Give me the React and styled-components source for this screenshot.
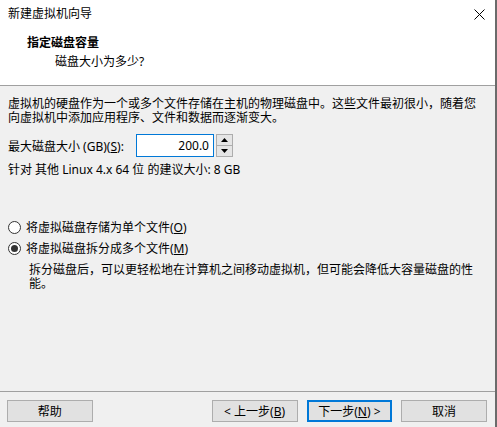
import styled, { createGlobalStyle } from "styled-components";

const GlobalStyle = createGlobalStyle`
  * {
    box-sizing: border-box;
    margin: 0;
    padding: 0;
  }
  body {
    margin: 0;
    background: #f0f0f0;
    font-family: "Noto Sans", "Noto Sans CJK SC", sans-serif;
    font-size: 12px;
    color: #000;
  }
`;

const Window = styled.div`
  width: 497px;
  height: 427px;
  display: flex;
  flex-direction: column;
  background: #f0f0f0;
  border-right: 2px solid #6b6b6b;
`;

const TitleBar = styled.div`
  height: 28px;
  background: #fff;
  display: flex;
  align-items: center;
  justify-content: space-between;
  padding: 0 10px 0 8px;
  line-height: 16px;
`;

const Header = styled.div`
  background: #fff;
  padding: 7px 0 15px 27px;
  border-bottom: 1px solid #a0a0a0;
  line-height: 16px;
`;

const HeaderTitle = styled.div`
  font-weight: bold;
`;

const HeaderSub = styled.div`
  margin-top: 3px;
  padding-left: 28px;
`;

const Body = styled.div`
  flex: 1;
  padding: 11px 8px 0 8px;
  display: flex;
  flex-direction: column;
`;

const Para = styled.p`
  line-height: 14px;
  white-space: nowrap;
  margin-top: ${(p) => p.$top || 0}px;
  padding-left: ${(p) => p.$indent || 0}px;
`;

const SizeRow = styled.div`
  margin-top: 9px;
  height: 23px;
  display: flex;
  align-items: center;
`;

const Label = styled.span`
  width: 128px;
  white-space: nowrap;
`;

const Input = styled.div`
  width: 78px;
  height: 23px;
  border: 1px solid #0078d7;
  background: #fff;
  text-align: right;
  padding-right: 4px;
  line-height: 21px;
`;

const Spinner = styled.div`
  margin-left: 2px;
  width: 17px;
  height: 23px;
  border: 1px solid #adadad;
  background: #e5e5e5;
  display: flex;
  flex-direction: column;
`;

const SpinHalf = styled.div`
  flex: 1;
  display: flex;
  align-items: center;
  justify-content: center;
  border-top: ${(p) => (p.$lower ? "1px solid #adadad" : "none")};
`;

const RadioRow = styled.label`
  display: flex;
  align-items: center;
  height: 16px;
  margin-top: ${(p) => p.$top}px;
  gap: 5px;
  white-space: nowrap;
`;

const Circle = styled.span`
  width: 13px;
  height: 13px;
  border-radius: 50%;
  border: 1px solid #333;
  background: #fff;
  display: flex;
  align-items: center;
  justify-content: center;
  &::after {
    content: "";
    display: ${(p) => (p.$on ? "block" : "none")};
    width: 7px;
    height: 7px;
    border-radius: 50%;
    background: #333;
  }
`;

const Footer = styled.div`
  height: 36px;
  border-top: 1px solid #a0a0a0;
  padding: 8px 8px 0 7px;
  display: flex;
  align-items: flex-start;
`;

const Button = styled.div`
  width: 86px;
  height: 22px;
  background: #e1e1e1;
  border: ${(p) => (p.$default ? "2px solid #0078d7" : "1px solid #adadad")};
  display: flex;
  align-items: center;
  justify-content: center;
  white-space: nowrap;
  margin-left: ${(p) => p.$gap || 0}px;
`;

const U = styled.span`
  text-decoration: underline;
`;

export default function App() {
  return (
    <>
      <GlobalStyle />
      <Window>
        <TitleBar>
          <span>新建虚拟机向导</span>
          <svg width="11" height="11" viewBox="0 0 11 11">
            <path d="M0.5 0.5 L10.5 10.5 M10.5 0.5 L0.5 10.5" stroke="#000" strokeWidth="1" />
          </svg>
        </TitleBar>
        <Header>
          <HeaderTitle>指定磁盘容量</HeaderTitle>
          <HeaderSub>磁盘大小为多少?</HeaderSub>
        </Header>
        <Body>
          <Para>
            虚拟机的硬盘作为一个或多个文件存储在主机的物理磁盘中。这些文件最初很小，随着您
            <br />
            向虚拟机中添加应用程序、文件和数据而逐渐变大。
          </Para>
          <SizeRow>
            <Label>
              最大磁盘大小 (GB)(<U>S</U>):
            </Label>
            <Input>200.0</Input>
            <Spinner>
              <SpinHalf>
                <svg width="7" height="4" viewBox="0 0 7 4">
                  <path d="M3.5 0 L7 4 L0 4 Z" fill="#000" />
                </svg>
              </SpinHalf>
              <SpinHalf $lower>
                <svg width="7" height="4" viewBox="0 0 7 4">
                  <path d="M0 0 L7 0 L3.5 4 Z" fill="#000" />
                </svg>
              </SpinHalf>
            </Spinner>
          </SizeRow>
          <Para $top={6}>针对 其他 Linux 4.x 64 位 的建议大小: 8 GB</Para>
          <RadioRow $top={42}>
            <Circle />
            <span>
              将虚拟磁盘存储为单个文件(<U>O</U>)
            </span>
          </RadioRow>
          <RadioRow $top={5}>
            <Circle $on />
            <span>
              将虚拟磁盘拆分成多个文件(<U>M</U>)
            </span>
          </RadioRow>
          <Para $top={7} $indent={21}>
            拆分磁盘后，可以更轻松地在计算机之间移动虚拟机，但可能会降低大容量磁盘的性
            <br />
            能。
          </Para>
        </Body>
        <Footer>
          <Button>帮助</Button>
          <Button $gap={119}>
            &lt; 上一步(<U>B</U>)
          </Button>
          <Button $gap={9} $default>
            下一步(<U>N</U>) &gt;
          </Button>
          <Button $gap={9}>取消</Button>
        </Footer>
      </Window>
    </>
  );
}
